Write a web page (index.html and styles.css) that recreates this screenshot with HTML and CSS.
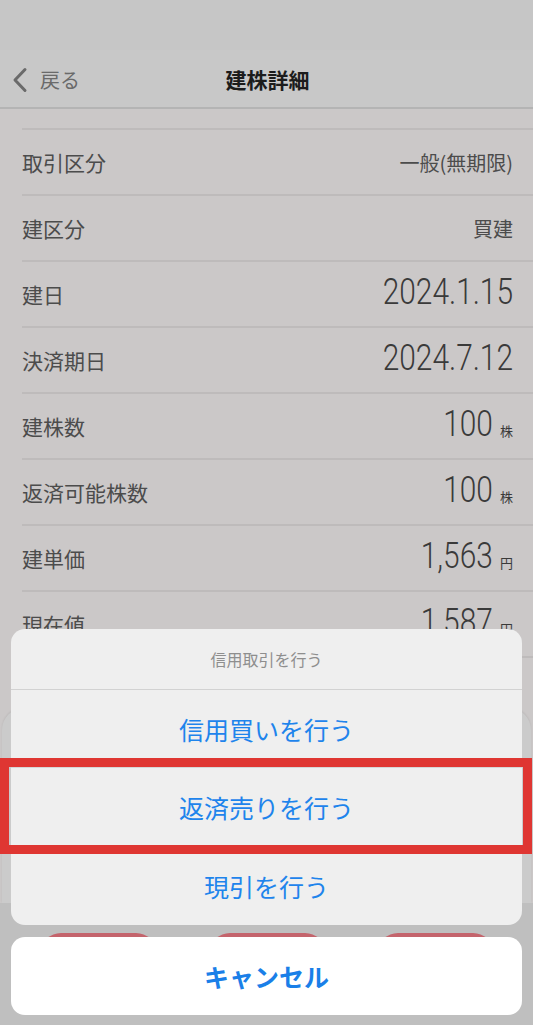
FILE: index.html
```html
<!DOCTYPE html>
<html lang="ja">
<head>
    <meta charset="UTF-8">
    <meta name="viewport" content="width=device-width, initial-scale=1.0">
    <title>建株詳細</title>
    <link rel="stylesheet" href="styles.css">
</head>
<body>
    <div class="screen">
        <div class="status"></div>

        <!-- ナビゲーションバー -->
        <div class="nav">
            <div class="back">
                <svg class="chevron" width="18" height="26" viewBox="0 0 18 26">
                    <path d="M14 2.5 L4 13 L14 23.5" fill="none" stroke="#6a6a6a" stroke-width="3" stroke-linecap="round" stroke-linejoin="round"/>
                </svg>
                <span>戻る</span>
            </div>
            <div class="title">建株詳細</div>
        </div>

        <!-- 建株の詳細 -->
        <div class="list">
            <div class="row">
                <span class="label">取引区分</span>
                <span class="text">一般(無期限)</span>
            </div>
            <div class="row">
                <span class="label">建区分</span>
                <span class="text">買建</span>
            </div>
            <div class="row">
                <span class="label">建日</span>
                <span class="value"><span class="num">2024.1.15</span></span>
            </div>
            <div class="row">
                <span class="label">決済期日</span>
                <span class="value"><span class="num">2024.7.12</span></span>
            </div>
            <div class="row">
                <span class="label">建株数</span>
                <span class="value"><span class="num">100</span><span class="unit">株</span></span>
            </div>
            <div class="row">
                <span class="label">返済可能株数</span>
                <span class="value"><span class="num">100</span><span class="unit">株</span></span>
            </div>
            <div class="row">
                <span class="label">建単価</span>
                <span class="value"><span class="num">1,563</span><span class="unit">円</span></span>
            </div>
            <div class="row">
                <span class="label">現在値</span>
                <span class="value"><span class="num">1,587</span><span class="unit">円</span></span>
            </div>
            <div class="row">
                <span class="label">評価損益</span>
                <span class="value"><span class="num">2,400</span><span class="unit">円</span></span>
            </div>
        </div>

        <!-- 下部パネル -->
        <div class="footer">
            <div class="panel"></div>
            <div class="tabbar">
                <div class="pill"></div>
                <div class="pill"></div>
                <div class="pill"></div>
            </div>
        </div>

        <!-- アクションシート -->
        <div class="actions">
            <div class="sheet">
                <div class="sheet-title">信用取引を行う</div>
                <div class="sheet-btn">信用買いを行う</div>
                <div class="sheet-btn">返済売りを行う</div>
                <div class="sheet-btn">現引を行う</div>
            </div>
            <div class="cancel">キャンセル</div>
        </div>

        <div class="highlight"></div>
    </div>
</body>
</html>
```

FILE: styles.css
```css
body {
    margin: 0;
    font-family: "Noto Sans CJK JP", sans-serif;
    background-color: #c6c6c6;
}
.screen {
    position: relative;
    width: 533px;
    height: 1025px;
    overflow: hidden;
    display: flex;
    flex-direction: column;
}
.status {
    height: 50px;
    flex: none;
}
.nav {
    position: relative;
    flex: none;
    height: 57px;
    border-bottom: 2px solid #b4b4b4;
    background-color: #c8c8c8;
    display: flex;
    align-items: center;
    justify-content: center;
}
.back {
    position: absolute;
    left: 11px;
    top: 15px;
    display: flex;
    align-items: center;
    gap: 11px;
    color: #6a6a6a;
    font-size: 20px;
}
.title {
    font-size: 21px;
    font-weight: bold;
    color: #1c1c1c;
    margin-left: 2px;
}
.list {
    flex: 1;
    overflow: hidden;
    padding-top: 19px;
    background-color: #cbc8c8;
}
.row {
    height: 64px;
    margin-left: 22px;
    padding-right: 20px;
    border-top: 2px solid #bebbbb;
    display: flex;
    align-items: center;
    justify-content: space-between;
}
.label {
    font-size: 21px;
    color: #4c4c4c;
}
.text {
    font-size: 20px;
    color: #4c4c4c;
}
.value {
    display: flex;
    align-items: baseline;
    color: #3a3a3a;
    margin-top: -4px;
}
.num {
    display: inline-block;
    font-family: "Roboto", sans-serif;
    font-weight: 300;
    font-size: 36px;
    line-height: 1;
    transform: scaleX(0.83);
    transform-origin: right;
}
.unit {
    font-size: 13px;
    margin-left: 7px;
}
.footer {
    flex: none;
    height: 317px;
    display: flex;
    flex-direction: column;
    background-color: #cbc8c8;
}
.panel {
    height: 195px;
    margin: 0 2px;
    border-radius: 22px 22px 0 0;
    background-color: #cbcbcb;
    box-shadow: 0 -1px 2px rgba(0, 0, 0, 0.08);
}
.tabbar {
    flex: 1;
    background-color: #bfbfbf;
    display: flex;
    padding: 30px 40px 0 41px;
    justify-content: space-between;
}
.pill {
    width: 115px;
    height: 40px;
    border-radius: 20px;
    background-color: #c4646c;
}
.actions {
    position: absolute;
    left: 11px;
    right: 11px;
    bottom: 10px;
    display: flex;
    flex-direction: column;
    gap: 12px;
}
.sheet {
    background-color: #efefef;
    border-radius: 14px;
    overflow: hidden;
}
.sheet-title {
    height: 60px;
    display: flex;
    align-items: center;
    justify-content: center;
    font-size: 16px;
    color: #8e8e8e;
    border-bottom: 1px solid #d2d2d2;
}
.sheet-btn {
    height: 77px;
    display: flex;
    align-items: center;
    justify-content: center;
    font-size: 25px;
    color: #1e84ec;
    border-bottom: 1px solid #d6d6d6;
}
.sheet-btn:last-child {
    border-bottom: none;
    height: 79px;
}
.cancel {
    height: 78px;
    border-radius: 14px;
    background-color: #fff;
    display: flex;
    align-items: center;
    justify-content: center;
    font-size: 25px;
    font-weight: bold;
    color: #1a7fe8;
}
.highlight {
    position: absolute;
    left: 0;
    top: 758px;
    width: 514px;
    height: 78px;
    border: 9px solid #df3632;
}
```
